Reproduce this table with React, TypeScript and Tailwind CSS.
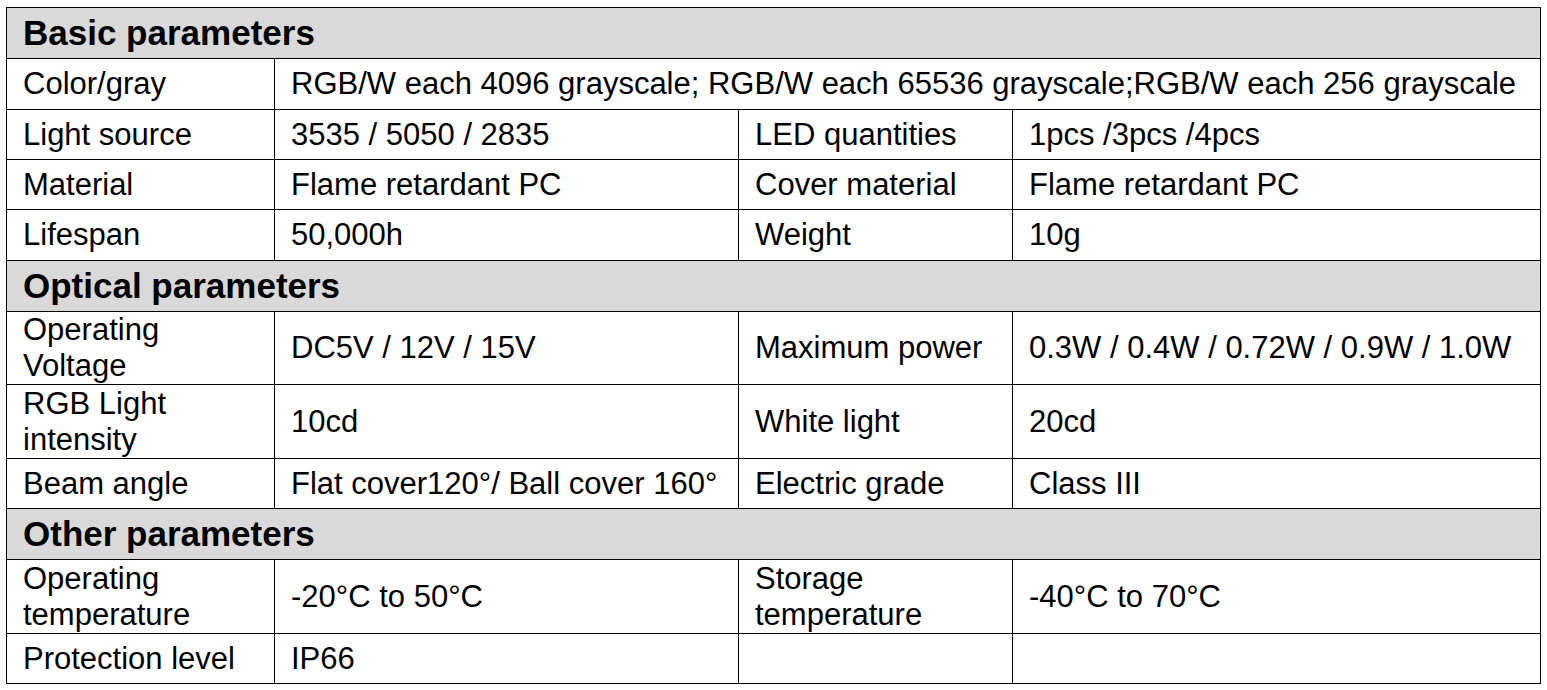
type Row =
  | { kind: 'head'; title: string }
  | { kind: 'wide'; label: string; value: string; h: string }
  | { kind: 'pair'; a: string; b: string; c: string; d: string; h: string };

const rows: Row[] = [
  { kind: 'head', title: 'Basic parameters' },
  {
    kind: 'wide',
    label: 'Color/gray',
    value: 'RGB/W each 4096 grayscale; RGB/W each 65536 grayscale;RGB/W each 256 grayscale',
    h: 'h-[51px]',
  },
  { kind: 'pair', a: 'Light source', b: '3535 / 5050 / 2835', c: 'LED quantities', d: '1pcs /3pcs /4pcs', h: 'h-[50px]' },
  { kind: 'pair', a: 'Material', b: 'Flame retardant PC', c: 'Cover material', d: 'Flame retardant PC', h: 'h-[50px]' },
  { kind: 'pair', a: 'Lifespan', b: '50,000h', c: 'Weight', d: '10g', h: 'h-[51px]' },
  { kind: 'head', title: 'Optical parameters' },
  { kind: 'pair', a: 'Operating Voltage', b: 'DC5V / 12V / 15V', c: 'Maximum power', d: '0.3W / 0.4W / 0.72W / 0.9W / 1.0W', h: 'h-[73px]' },
  { kind: 'pair', a: 'RGB Light intensity', b: '10cd', c: 'White light', d: '20cd', h: 'h-[74px]' },
  { kind: 'pair', a: 'Beam angle', b: 'Flat cover120°/ Ball cover 160°', c: 'Electric grade', d: 'Class III', h: 'h-[50px]' },
  { kind: 'head', title: 'Other parameters' },
  { kind: 'pair', a: 'Operating temperature', b: '-20°C to 50°C', c: 'Storage temperature', d: '-40°C to 70°C', h: 'h-[74px]' },
  { kind: 'pair', a: 'Protection level', b: 'IP66', c: '', d: '', h: 'h-[50px]' },
];

const cell = 'border border-black px-[16px] py-0 align-middle text-left leading-[1.15]';

export default function App() {
  return (
    <div className="min-h-screen bg-white pl-[6px] pt-[7px] text-black" style={{ fontFamily: '"Liberation Sans", Arial, sans-serif' }}>
      <table className="table-fixed border-collapse text-[31px] w-[1534px]">
        <colgroup>
          <col className="w-[268px]" />
          <col className="w-[464px]" />
          <col className="w-[274px]" />
          <col className="w-[528px]" />
        </colgroup>
        <tbody>
          {rows.map((r, i) => {
            if (r.kind === 'head') {
              return (
                <tr key={i}>
                  <td colSpan={4} className={`${cell} h-[51px] bg-[#d9d9d9] text-[35px] font-bold`}>
                    {r.title}
                  </td>
                </tr>
              );
            }
            if (r.kind === 'wide') {
              return (
                <tr key={i}>
                  <td className={`${cell} ${r.h}`}>{r.label}</td>
                  <td colSpan={3} className={`${cell} ${r.h} whitespace-nowrap`}>
                    {r.value}
                  </td>
                </tr>
              );
            }
            return (
              <tr key={i}>
                <td className={`${cell} ${r.h}`}>{r.a}</td>
                <td className={`${cell} ${r.h}`}>{r.b}</td>
                <td className={`${cell} ${r.h}`}>{r.c}</td>
                <td className={`${cell} ${r.h}`}>{r.d}</td>
              </tr>
            );
          })}
        </tbody>
      </table>
    </div>
  );
}
